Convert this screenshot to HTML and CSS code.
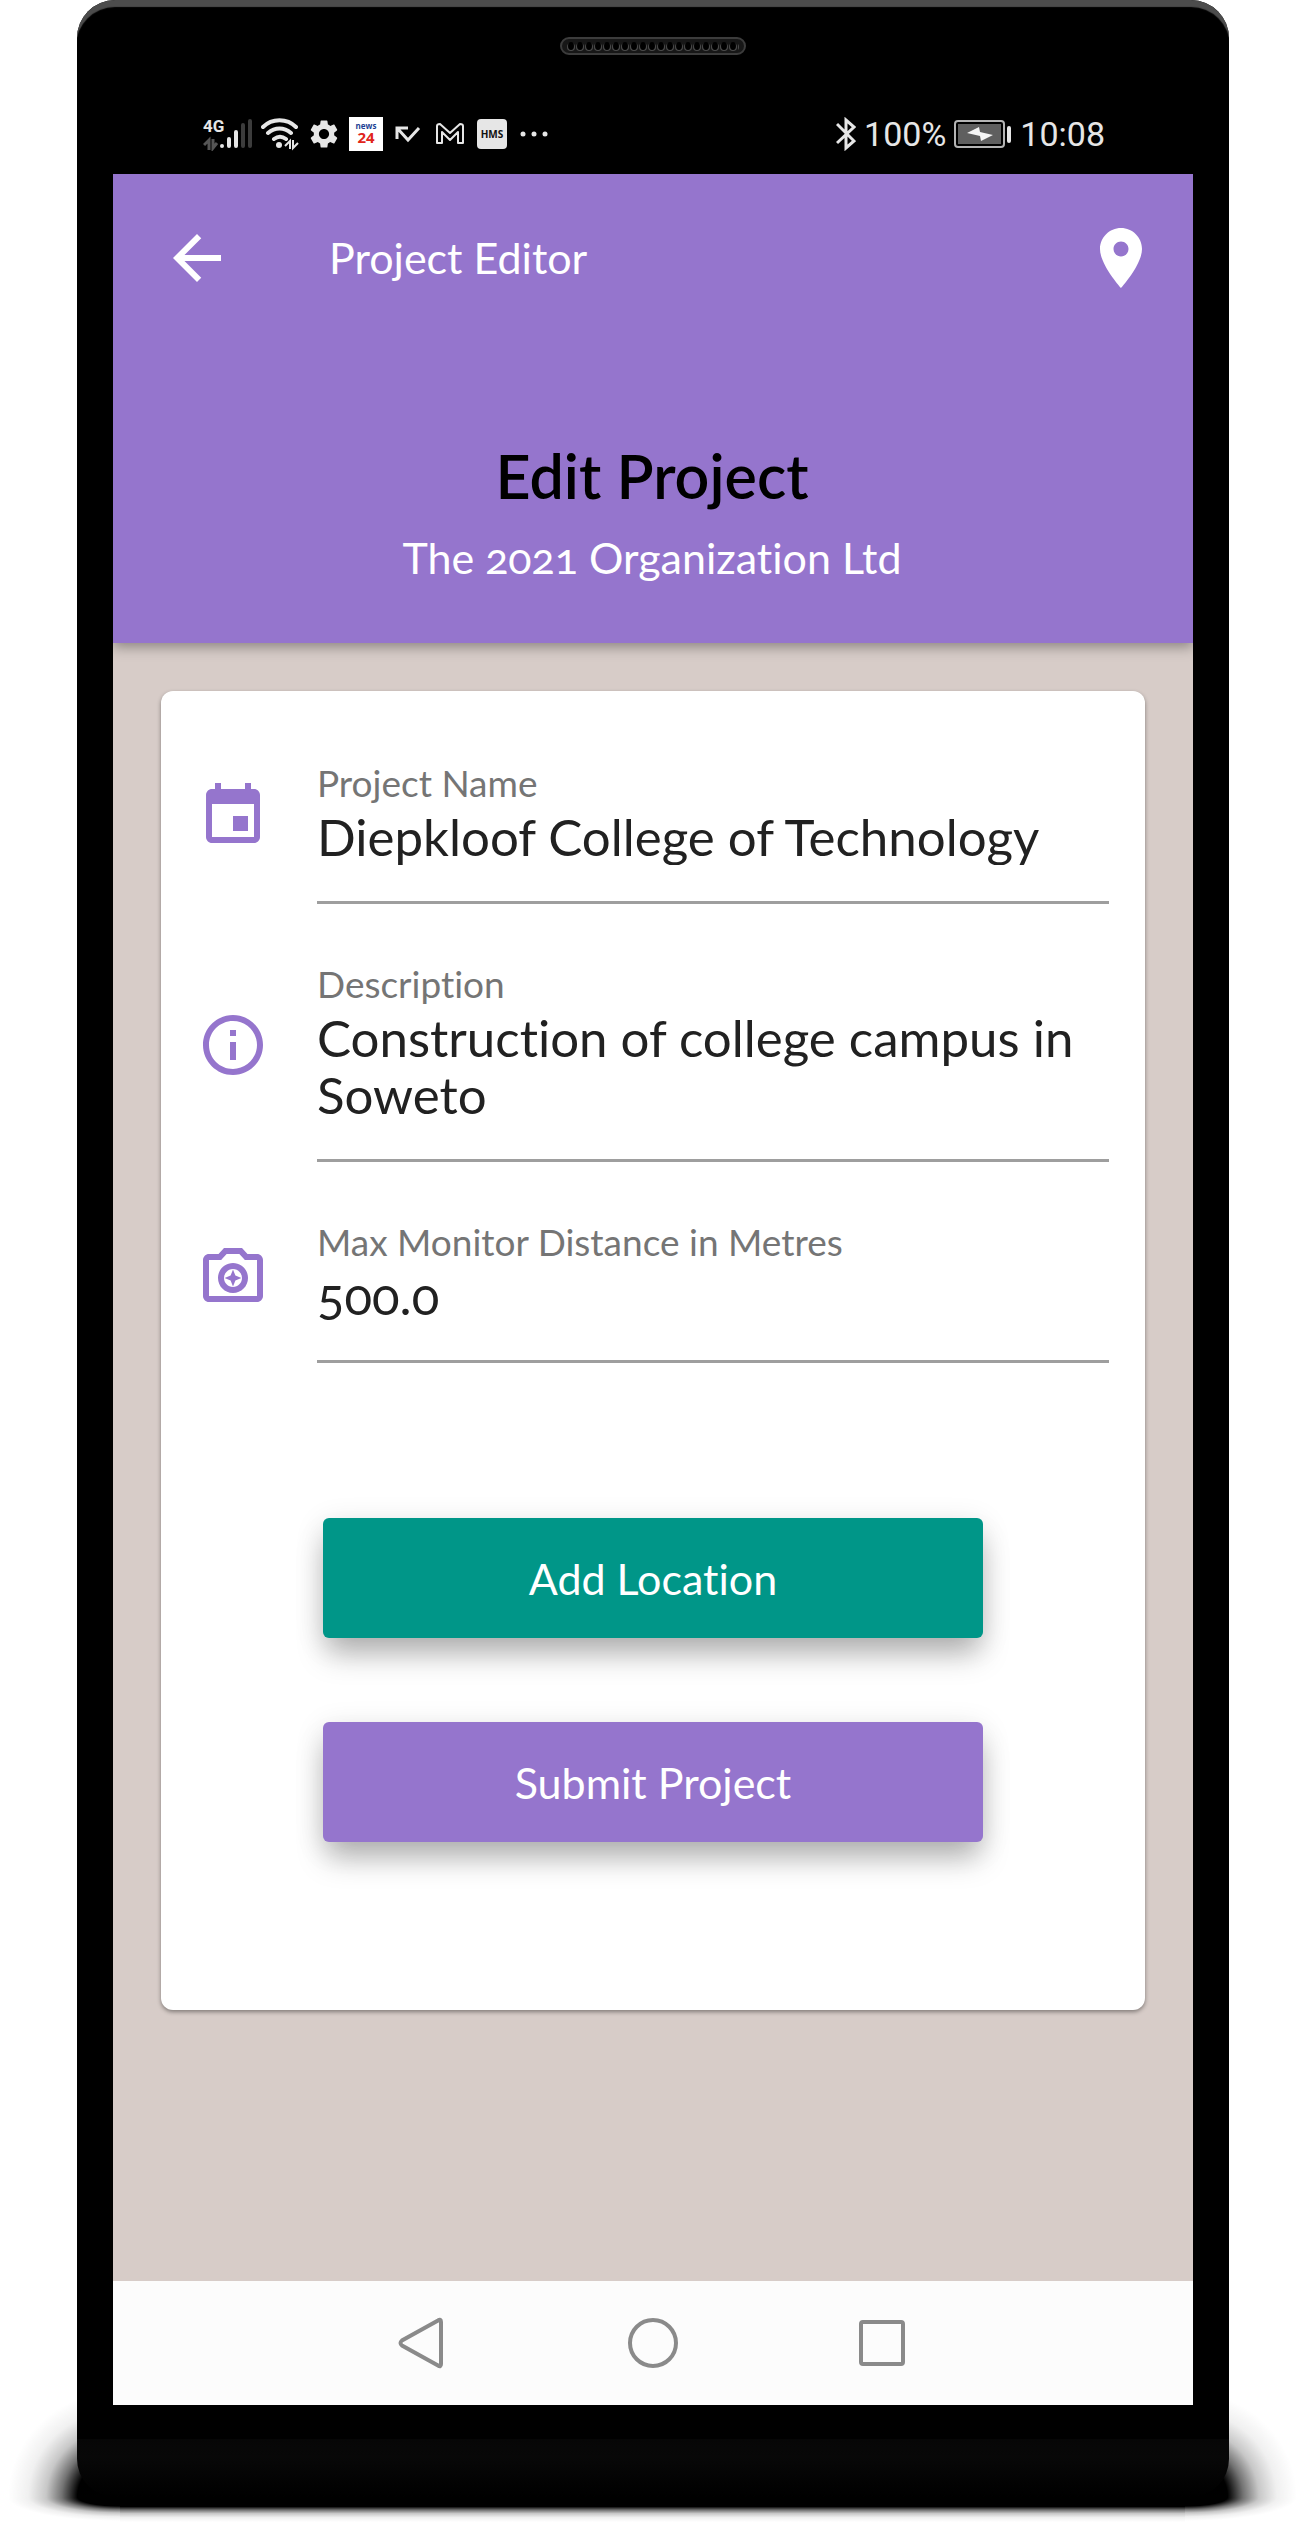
FILE: index.html
```html
<!DOCTYPE html>
<html lang="en">
<head>
<meta charset="utf-8">
<meta name="viewport" content="width=device-width, initial-scale=1">
<title>Project Editor</title>
<link rel="stylesheet" href="styles.css">
</head>
<body>
<div class="phone">
  <div class="bezel-top">
    <svg class="earpiece" width="186" height="18" viewBox="0 0 186 18" aria-hidden="true">
      <defs>
        <pattern id="holes" x="7" y="0" width="9" height="18" patternUnits="userSpaceOnUse">
          <ellipse cx="4" cy="10" rx="4" ry="4" fill="#4a4a4a"/>
          <ellipse cx="4" cy="9" rx="3" ry="4" fill="#000"/>
        </pattern>
      </defs>
      <rect x="1" y="1" width="184" height="16" rx="8" fill="#171717" stroke="#3c3c3c" stroke-width="2"/>
      <rect x="7" y="3" width="172" height="12" fill="url(#holes)"/>
    </svg>
  </div>

  <div class="status-bar">
    <div class="status-group status-left">
      <svg width="50" height="34" viewBox="0 0 50 34" aria-hidden="true">
        <text x="0" y="15" class="net-label">4G</text>
        <path d="M1 28l5-5v10M10 22v9l4-5" fill="none" stroke="#555" stroke-width="3"/>
        <g stroke-width="4" stroke-linecap="round" stroke="#e6e6e6">
          <path d="M19 29v0M26 22v7M33 15v14"/>
          <path d="M40 8v21M47 4v25" stroke="#3c3c3c"/>
        </g>
      </svg>
      <svg width="38" height="34" viewBox="0 0 38 34" aria-hidden="true">
        <g fill="none" stroke="#e6e6e6" stroke-width="4" stroke-linecap="round">
          <path d="M2 10C11 1 26 1 35 10M7 16c7-6 16-6 23 0M13 22c4-3 8-3 12 0"/>
        </g>
        <circle cx="18" cy="28" r="3" fill="#e6e6e6"/>
        <path d="M24 29l5-5v8M32 23v8l5-5" fill="none" stroke="#e6e6e6" stroke-width="2"/>
      </svg>
      <svg width="34" height="34" viewBox="0 0 24 24" aria-hidden="true">
        <path fill="#e6e6e6" d="M19.14 12.94c.04-.3.06-.61.06-.94 0-.32-.02-.64-.07-.94l2.03-1.58c.18-.14.23-.41.12-.61l-1.92-3.32c-.12-.22-.37-.29-.59-.22l-2.39.96c-.5-.38-1.03-.7-1.62-.94l-.36-2.54c-.04-.24-.24-.41-.48-.41h-3.84c-.24 0-.43.17-.47.41l-.36 2.54c-.59.24-1.13.57-1.62.94l-2.39-.96c-.22-.08-.47 0-.59.22L2.74 8.87c-.12.21-.08.47.12.61l2.03 1.58c-.05.3-.09.63-.09.94s.02.64.07.94l-2.03 1.58c-.18.14-.23.41-.12.61l1.92 3.32c.12.22.37.29.59.22l2.39-.96c.5.38 1.03.7 1.62.94l.36 2.54c.05.24.24.41.48.41h3.84c.24 0 .44-.17.47-.41l.36-2.54c.59-.24 1.13-.56 1.62-.94l2.39.96c.22.08.47 0 .59-.22l1.92-3.32c.12-.22.07-.47-.12-.61l-2.01-1.58zM12 15.6c-1.98 0-3.6-1.62-3.6-3.6s1.62-3.6 3.6-3.6 3.6 1.62 3.6 3.6-1.62 3.6-3.6 3.6z"/>
      </svg>
      <svg width="34" height="34" viewBox="0 0 34 34" aria-hidden="true">
        <rect width="34" height="34" fill="#fff"/>
        <text x="17" y="12" class="news-label">news</text>
        <text x="17" y="26" class="news-number">24</text>
      </svg>
      <svg width="34" height="34" viewBox="0 0 34 34" aria-hidden="true">
        <path d="M6 22V11h11M7 12l10 11 11-12" fill="none" stroke="#e6e6e6" stroke-width="3"/>
      </svg>
      <svg width="34" height="34" viewBox="0 0 34 34" aria-hidden="true">
        <path d="M4 26V9q0-2 3-2l10 9 10-9q3 0 3 2v17h-5V15l-8 8-8-8v11z" fill="none" stroke="#e6e6e6" stroke-width="2" stroke-linejoin="round"/>
      </svg>
      <svg width="34" height="34" viewBox="0 0 34 34" aria-hidden="true">
        <rect x="2" y="2" width="30" height="30" rx="4" fill="#e6e6e6"/>
        <text x="17" y="21" class="hms-label">HMS</text>
      </svg>
      <svg width="34" height="34" viewBox="0 0 34 34" aria-hidden="true">
        <g fill="#e6e6e6"><circle cx="6" cy="17" r="2.500"/><circle cx="17" cy="17" r="2.500"/><circle cx="28" cy="17" r="2.500"/></g>
      </svg>
    </div>
    <div class="status-group status-right">
      <svg width="20" height="34" viewBox="0 0 20 34" aria-hidden="true">
        <path d="M1 7l17 17-8 7V3l8 7L1 26" fill="none" stroke="#e6e6e6" stroke-width="3"/>
      </svg>
      <span>100%</span>
      <svg class="battery" width="58" height="28" viewBox="0 0 58 28" aria-hidden="true">
        <rect x="1" y="1" width="49" height="26" rx="3" fill="none" stroke="#b4b4b4" stroke-width="2"/>
        <rect x="4" y="4" width="43" height="20" fill="#5f5f5f"/>
        <rect x="53" y="6" width="4" height="17" rx="2" fill="#e6e6e6"/>
        <path d="M13 13l12-6 1 5 13 3-12 6-1-5z" fill="#f5f5f5"/>
      </svg>
      <span>10:08</span>
    </div>
  </div>

  <div class="screen">
    <header class="header">
      <div class="app-bar">
        <button class="icon-button" type="button" aria-label="Back">
          <svg class="icon" viewBox="0 0 24 24"><path d="M20 11H7.83l5.59-5.59L12 4l-8 8 8 8 1.41-1.41L7.83 13H20v-2z"/></svg>
        </button>
        <span class="app-title">Project Editor</span>
        <button class="icon-button" type="button" aria-label="Location">
          <svg class="icon" viewBox="0 0 24 24"><path d="M12 2C8.13 2 5 5.13 5 9c0 5.25 7 13 7 13s7-7.75 7-13c0-3.87-3.13-7-7-7zm0 9.5c-1.38 0-2.5-1.12-2.5-2.5s1.12-2.5 2.5-2.5 2.5 1.12 2.5 2.5-1.12 2.5-2.5 2.5z"/></svg>
        </button>
      </div>
      <h1 class="heading">Edit Project</h1>
      <p class="organization">The 2021 Organization Ltd</p>
    </header>

    <main class="content">
      <form class="card">
        <div class="field">
          <svg class="icon field-icon" viewBox="0 0 24 24" aria-hidden="true"><path d="M17 12h-5v5h5v-5zM16 1v2H8V1H6v2H5c-1.11 0-1.99.9-1.99 2L3 19c0 1.1.89 2 2 2h14c1.1 0 2-.9 2-2V5c0-1.1-.9-2-2-2h-1V1h-2zm3 18H5V8h14v11z"/></svg>
          <div class="field-body">
            <label for="name">Project Name</label>
            <input id="name" type="text" value="Diepkloof College of Technology">
          </div>
        </div>
        <div class="field">
          <svg class="icon field-icon" viewBox="0 0 24 24" aria-hidden="true"><path d="M11 7h2v2h-2zm0 4h2v6h-2zm1-9C6.48 2 2 6.48 2 12s4.48 10 10 10 10-4.48 10-10S17.52 2 12 2zm0 18c-4.41 0-8-3.59-8-8s3.59-8 8-8 8 3.59 8 8-3.59 8-8 8z"/></svg>
          <div class="field-body">
            <label for="description">Description</label>
            <textarea id="description" rows="2">Construction of college campus in Soweto</textarea>
          </div>
        </div>
        <div class="field">
          <svg class="icon field-icon" viewBox="0 0 24 24" aria-hidden="true"><path d="M20 5h-3.170L15 3H9L7.170 5H4c-1.100 0-2 .9-2 2v12c0 1.100.9 2 2 2h16c1.100 0 2-.9 2-2V7c0-1.100-.9-2-2-2zm0 14H4V7h4.050l.59-.65L9.880 5h4.240l1.240 1.350.59.65H20v12zM12 8c-2.760 0-5 2.240-5 5s2.240 5 5 5 5-2.240 5-5-2.240-5-5-5zm0 8c-1.650 0-3-1.350-3-3s1.350-3 3-3 3 1.350 3 3-1.350 3-3 3zM12 10.200l-.8 2-2 .8 2 .8.8 2 .8-2 2-.8-2-.8z"/></svg>
          <div class="field-body">
            <label for="distance">Max Monitor Distance in Metres</label>
            <input id="distance" type="text" inputmode="decimal" value="500.0">
          </div>
        </div>
        <div class="actions">
          <button class="button button-teal" type="button">Add Location</button>
          <button class="button" type="submit">Submit Project</button>
        </div>
      </form>
    </main>

    <nav class="nav-bar">
      <button class="nav-button" type="button" aria-label="Back">
        <svg width="60" height="60" viewBox="0 0 60 60"><path d="M45 7.500q3-2 3 1.500v42q0 3.500-3 1.500L9 32.500q-3-2.500 0-5z"/></svg>
      </button>
      <button class="nav-button" type="button" aria-label="Home">
        <svg width="60" height="60" viewBox="0 0 60 60"><circle cx="30" cy="30" r="23"/></svg>
      </button>
      <button class="nav-button" type="button" aria-label="Recent apps">
        <svg width="60" height="60" viewBox="0 0 60 60"><rect x="8" y="9" width="42" height="42" rx="2"/></svg>
      </button>
    </nav>
  </div>
  <div class="bezel-bottom"></div>
</div>
</body>
</html>
```
FILE: styles.css
```css
* {
  box-sizing: border-box;
}

body {
  margin: 0;
  padding: 0 76px 25px 77px;
  background: #fff;
  font-family: Lato, "Open Sans", sans-serif;
  font-weight: 400;
  font-variant-numeric: oldstyle-nums;
  font-variant-ligatures: none;
}

button,
input,
textarea {
  font: inherit;
  font-variant-numeric: inherit;
  font-variant-ligatures: inherit;
  color: inherit;
  margin: 0;
  padding: 0;
  border: 0;
  background: none;
}

/* Device frame */
.phone {
  position: relative;
  display: flex;
  flex-direction: column;
  min-height: calc(100vh - 25px);
  padding: 0 36px;
  border-radius: 38px;
  background: linear-gradient(to top, #000 0, #080808 40px, #060606 58px, #000 58px);
  box-shadow: inset 0 8px 1px -1px #4c4c4c;
}

.phone::before {
  content: "";
  position: absolute;
  z-index: -1;
  left: -77px;
  right: -76px;
  bottom: -25px;
  height: 131px;
  background:
    radial-gradient(112px 106px at 100% 100%, #000 38%, rgba(0, 0, 0, .55) 52%, rgba(0, 0, 0, .22) 66%, rgba(0, 0, 0, .06) 82%, transparent) 0 0 / 120px 106px no-repeat,
    radial-gradient(112px 106px at 0 100%, #000 38%, rgba(0, 0, 0, .55) 52%, rgba(0, 0, 0, .22) 66%, rgba(0, 0, 0, .06) 82%, transparent) 100% 0 / 120px 106px no-repeat,
    radial-gradient(112px 24px at 100% 0, #000 38%, rgba(0, 0, 0, .55) 52%, rgba(0, 0, 0, .22) 66%, rgba(0, 0, 0, .06) 82%, transparent) 0 100% / 120px 25px no-repeat,
    radial-gradient(112px 24px at 0 0, #000 38%, rgba(0, 0, 0, .55) 52%, rgba(0, 0, 0, .22) 66%, rgba(0, 0, 0, .06) 82%, transparent) 100% 100% / 120px 25px no-repeat,
    linear-gradient(#000 38%, rgba(0, 0, 0, .55) 52%, rgba(0, 0, 0, .22) 66%, rgba(0, 0, 0, .06) 82%, transparent) 120px 100% / calc(100% - 240px) 25px no-repeat,
    linear-gradient(#000, #000) 50% 100px / calc(100% - 240px) 6px no-repeat;
}

.bezel-top {
  display: flex;
  justify-content: center;
  padding: 37px 0 38px;
}

.bezel-bottom {
  height: 92px;
}

/* Android status bar */
.status-bar {
  display: flex;
  justify-content: space-between;
  align-items: center;
  height: 81px;
  padding: 0 88px 0 90px;
  color: #e6e6e6;
  font-family: Roboto, sans-serif;
  font-size: 34px;
  font-variant-numeric: normal;
}

.status-group {
  display: flex;
  align-items: center;
  gap: 8px;
}

.net-label {
  font: 700 17px Roboto, sans-serif;
  fill: #e6e6e6;
}

.news-label {
  font: 700 8px "Open Sans", sans-serif;
  fill: #1c3f94;
  text-anchor: middle;
}

.news-number {
  font: 700 15px "Open Sans", sans-serif;
  fill: #e1251b;
  text-anchor: middle;
}

.hms-label {
  font: 700 10px "Open Sans", sans-serif;
  fill: #111;
  text-anchor: middle;
}

/* App */
.screen {
  flex: 1;
  display: flex;
  flex-direction: column;
  background: #d7ccc8;
}

.icon {
  display: block;
  width: 72px;
  height: 72px;
  fill: currentColor;
}

.header {
  position: relative;
  padding: 48px 36px 57px 48px;
  background: #9575cd;
  color: #fff;
  box-shadow: 0 4px 12px rgba(0, 0, 0, .35);
}

.app-bar {
  display: flex;
  align-items: center;
  gap: 96px;
}

.app-title {
  flex: 1;
  font-size: 43px;
  line-height: 56px;
}

.heading {
  margin: 142px 0 0;
  padding-right: 14px;
  color: #000;
  font-size: 61px;
  font-weight: 600;
  line-height: 80px;
  text-align: center;
}

.organization {
  margin: 14px 0 0;
  padding-right: 14px;
  font-size: 43px;
  line-height: 56px;
  text-align: center;
}

.content {
  flex: 1;
  padding: 48px;
}

.card {
  padding: 36px 36px 168px;
  border-radius: 12px;
  background: #fff;
  box-shadow: 0 2px 4px rgba(0, 0, 0, .4);
}

.field {
  display: flex;
  align-items: center;
  gap: 48px;
  margin-bottom: 24px;
}

.field-icon {
  flex: none;
  color: #9575cd;
}

.field-body {
  flex: 1;
  min-width: 0;
  padding: 33px 0 36px;
  border-bottom: 3px solid #9e9e9e;
}

.field-body label {
  display: block;
  margin-bottom: 3px;
  color: #757575;
  font-size: 37px;
  line-height: 45px;
}

.field-body input,
.field-body textarea {
  display: block;
  width: 100%;
  height: 57px;
  color: #212121;
  font-size: 51px;
  line-height: 57px;
  outline: 0;
  resize: none;
  overflow: hidden;
}

.field-body textarea {
  height: 114px;
}

.actions {
  display: flex;
  flex-direction: column;
  align-items: center;
  gap: 84px;
  padding-top: 131px;
}

.button {
  width: 100%;
  max-width: 660px;
  height: 120px;
  border-radius: 6px;
  background: #9575cd;
  color: #fff;
  font-size: 43px;
  box-shadow: 0 20px 30px -4px rgba(0, 0, 0, .26), 0 6px 30px rgba(0, 0, 0, .12);
}

.button-teal {
  background: #009688;
}

/* Android navigation bar */
.nav-bar {
  display: flex;
  justify-content: center;
  align-items: center;
  gap: 170px;
  height: 124px;
  background: #fcfcfc;
}

.nav-button svg {
  display: block;
  fill: none;
  stroke: #8a8a8a;
  stroke-width: 4;
}
```
